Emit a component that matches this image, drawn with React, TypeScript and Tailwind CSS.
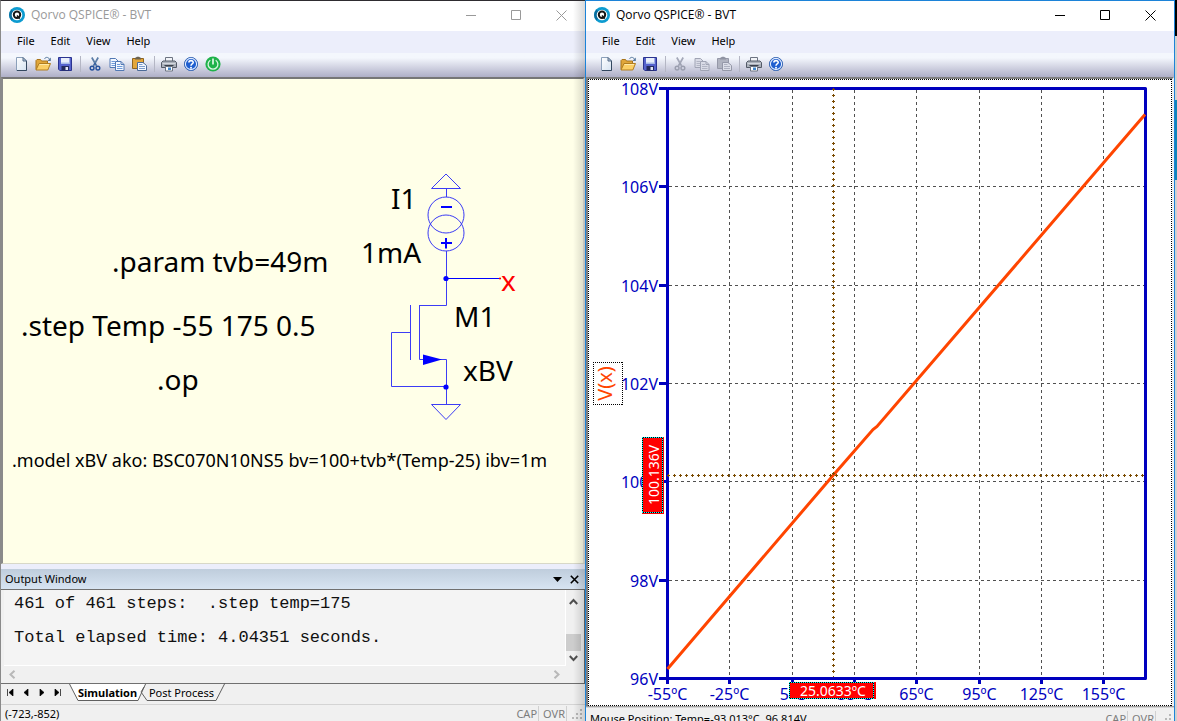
import React from "react";

const ui = "font-['Noto_Sans','Open_Sans',sans-serif]";

function Logo() {
  return (
    <svg viewBox="0 0 16 16" className="size-4 shrink-0" aria-hidden="true">
      <circle cx="8" cy="8" r="8" fill="#0c9bd0" />
      <path d="M2.4 2.4A8 8 0 0 0 2.4 13.6L8 8Z" fill="#0a6c9c" />
      <circle cx="8" cy="8" r="5.3" fill="#fff" />
      <circle cx="8" cy="7.7" r="3.2" fill="none" stroke="#161616" strokeWidth="2" />
      <path d="M8 8.5L10.8 11.6" stroke="#161616" strokeWidth="1.6" />
    </svg>
  );
}

function NewIcon() {
  return (
    <svg viewBox="0 0 16 16" className="size-4">
      <defs>
        <linearGradient id="page" x1="0" y1="0" x2="1" y2="1">
          <stop offset="0" stopColor="#fff" />
          <stop offset="1" stopColor="#d5e2f1" />
        </linearGradient>
      </defs>
      <path d="M3.5 1.5H10L13.5 5V14.5H3.5Z" fill="url(#page)" stroke="#8ba0ba" />
      <path d="M13.5 5V14.5H4" fill="none" stroke="#33475f" />
      <path d="M10 1.5V5H13.5Z" fill="#b7c8dc" stroke="#566c88" />
    </svg>
  );
}

function OpenIcon() {
  return (
    <svg viewBox="0 0 16 16" className="size-4">
      <path d="M1 13.5V4.5L2 3.5H5.5L6.5 5H12.5V13.5Z" fill="#e0a63a" stroke="#a8741b" />
      <path d="M1 14L4 7.5H15.5L12.8 14Z" fill="#fbcf66" stroke="#b07d20" />
      <path d="M4.6 8.5H14" stroke="#ffe9a8" />
      <path d="M9.5 3C10.5 .8 13 .8 14.4 3" fill="none" stroke="#55779c" />
      <path d="M15.8 1.6V5H12.4Z" fill="#55779c" />
    </svg>
  );
}

function SaveIcon() {
  return (
    <svg viewBox="0 0 16 16" className="size-4">
      <path d="M1.5 1.5H14.5V14.5H2.8L1.5 13.2Z" fill="#5562cc" stroke="#2b3490" />
      <path d="M4 2H12.5V8H4Z" fill="#e9effb" />
      <path d="M4 6.5H12.5V8H4Z" fill="#a9bce8" />
      <path d="M4.5 10H12V14.5H4.5Z" fill="#23295c" />
      <path d="M8.5 11H11V14H8.5Z" fill="#e2e6f5" />
    </svg>
  );
}

function CutIcon({ off }: { off?: boolean }) {
  const blade = off ? "#a4a8b8" : "#5c7ea8";
  const grip = off ? "#9a9eae" : "#24509c";
  return (
    <svg viewBox="0 0 16 16" className="size-4">
      <path d="M4.8 1.5L9.6 10M11.2 1.5L6.4 10" stroke={blade} strokeWidth="1.7" />
      <path d="M6.5 8.5H9.5L8 6.8Z" fill={grip} />
      <circle cx="5.1" cy="12.1" r="1.9" fill="none" stroke={grip} strokeWidth="1.4" />
      <circle cx="10.9" cy="12.1" r="1.9" fill="none" stroke={grip} strokeWidth="1.4" />
    </svg>
  );
}

function CopyIcon({ off }: { off?: boolean }) {
  const edge = off ? "#a0a4b4" : "#5279b4";
  const fill = off ? "#d9dbe6" : "#f4f8ff";
  const line = off ? "#b2b5c4" : "#6f9bd8";
  return (
    <svg viewBox="0 0 16 16" className="size-4">
      <path d="M1 2.5H6.5L9 5V11.5H1Z" fill={fill} stroke={edge} />
      <path d="M2.5 5.5H6M2.5 7.5H6M2.5 9.5H6" stroke={line} />
      <path d="M6.5 5.5H12L15 8.5V14.5H6.5Z" fill={fill} stroke={edge} />
      <path d="M12 5.5V8.5H15" fill="none" stroke={edge} />
      <path d="M8 8.5H11M8 10.5H13.5M8 12.5H13.5" stroke={line} />
    </svg>
  );
}

function PasteIcon({ off }: { off?: boolean }) {
  return (
    <svg viewBox="0 0 16 16" className="size-4">
      <path d="M1.5 2.5H12.5V12.5H1.5Z" fill={off ? "#b0b3c0" : "#e3a63a"} stroke={off ? "#9598a8" : "#8f6420"} />
      <path d="M4 3.5V2L6 .8H8L10 2V3.5Z" fill={off ? "#8f93a2" : "#6a6250"} />
      <path d="M6.5 6.5H12L15.5 9.5V14.5H6.5Z" fill={off ? "#dcdee8" : "#f4f8ff"} stroke={off ? "#9598a8" : "#4c6b98"} />
      <path d="M8 8.5H11.5M8 10.5H14M8 12.5H14" stroke={off ? "#aeb1c0" : "#7d9ccc"} />
    </svg>
  );
}

function PrintIcon() {
  return (
    <svg viewBox="0 0 16 16" className="size-4">
      <path d="M4.5 6V1.5H11.5V6" fill="#f2f4f8" stroke="#6d7482" />
      <path d="M.5 6.5L2 5H14L15.5 6.5V11.5H.5Z" fill="#aab0ba" stroke="#535a67" />
      <path d="M1.5 7.5H14.5" stroke="#d4d8df" />
      <path d="M3.5 9.5H12.5" stroke="#3a404b" />
      <path d="M4.5 10.5H11.5V15H4.5Z" fill="#fff" stroke="#6d7482" />
      <path d="M7 11.5H10V14H7Z" fill="#3f86cc" />
    </svg>
  );
}

function HelpIcon() {
  return (
    <svg viewBox="0 0 16 16" className="size-4">
      <circle cx="8" cy="8" r="6.6" fill="#1f5fd0" stroke="#3b69b4" />
      <circle cx="8" cy="8" r="5.6" fill="none" stroke="#e2edff" strokeWidth="1.1" />
      <path d="M5.9 6.6C5.9 3.9 10.3 4 10.2 6.5C10.1 8 8 8 8 9.7" fill="none" stroke="#fff" strokeWidth="1.6" />
      <circle cx="8" cy="11.7" r="1" fill="#fff" />
    </svg>
  );
}

function PowerIcon() {
  return (
    <svg viewBox="0 0 16 16" className="size-4">
      <circle cx="8" cy="8" r="7.6" fill="#1fb24a" />
      <path d="M5.3 4.2A4.9 4.9 0 1 0 10.7 4.2" fill="none" stroke="#d9f7e0" strokeWidth="1.3" />
      <path d="M8 2.5V8.5" stroke="#fff" strokeWidth="1.5" />
    </svg>
  );
}

function TitleBar({ active }: { active: boolean }) {
  return (
    <header
      className={`flex h-[30px] shrink-0 items-center bg-white pr-px pb-[2px] pl-2 ${active ? "text-black" : "text-[#999999]"}`}
    >
      <Logo />
      <h1 className="ml-[6px] flex-1 font-['Open_Sans','Noto_Sans',sans-serif] text-[12px] whitespace-nowrap">
        Qorvo QSPICE® - BVT
      </h1>
      <button aria-label="Minimize" className="flex h-full w-[45px] items-center justify-center">
        <svg viewBox="0 0 11 11" className="size-[11px]"><path d="M0 5.5H10" stroke="currentColor" /></svg>
      </button>
      <button aria-label="Maximize" className="flex h-full w-[45px] items-center justify-center">
        <svg viewBox="0 0 11 11" className="size-[11px]"><path d="M.5 .5H9.5V9.5H.5Z" fill="none" stroke="currentColor" /></svg>
      </button>
      <button aria-label="Close" className="flex h-full w-[45px] items-center justify-center">
        <svg viewBox="0 0 11 11" className="size-[11px]"><path d="M.5 .5L10.5 10.5M10.5 .5L.5 10.5" stroke="currentColor" /></svg>
      </button>
    </header>
  );
}

function MenuBar() {
  return (
    <nav className="flex h-[22px] shrink-0 items-center gap-4 bg-[#eceefb] pb-[2px] pl-4 text-[11px] text-black">
      {["File", "Edit", "View", "Help"].map((m) => (
        <button key={m}>{m}</button>
      ))}
    </nav>
  );
}

function Tool({ label, off, children }: { label: string; off?: boolean; children: React.ReactNode }) {
  return (
    <button aria-label={label} disabled={off} className="flex w-[22px] items-center justify-center">
      {children}
    </button>
  );
}

function Divider() {
  return (
    <span className="flex w-2 justify-center">
      <span className="h-4 w-px bg-[#b4b6c4]" />
    </span>
  );
}

function Toolbar({ schematic }: { schematic: boolean }) {
  const off = !schematic;
  return (
    <div className="flex h-[24px] shrink-0 items-center bg-linear-to-b from-[#f4f7fd] from-20% to-[#afafc7] pb-[2px] pl-[9px]">
      <Tool label="New"><NewIcon /></Tool>
      <Tool label="Open"><OpenIcon /></Tool>
      <Tool label="Save"><SaveIcon /></Tool>
      <Divider />
      <Tool label="Cut" off={off}><CutIcon off={off} /></Tool>
      <Tool label="Copy" off={off}><CopyIcon off={off} /></Tool>
      <Tool label="Paste" off={off}><PasteIcon off={off} /></Tool>
      <Divider />
      <Tool label="Print"><PrintIcon /></Tool>
      <Tool label="Help"><HelpIcon /></Tool>
      {schematic && <Tool label="Run"><PowerIcon /></Tool>}
    </div>
  );
}

function Schematic() {
  return (
    <svg
      role="img"
      aria-label="Schematic"
      viewBox="3 79 580 484"
      preserveAspectRatio="xMinYMin meet"
      className="h-full w-full font-['Noto_Sans',sans-serif]"
    >
      <g fill="none" stroke="#3c3cf5" strokeWidth="1">
        <path d="M446 174L460.5 188.5H431.5Z M446.5 188V197" />
        <circle cx="446" cy="215" r="18" />
        <circle cx="446" cy="233" r="18" />
        <path d="M446.500 251V305.500H419.500 M419.500 305V359.500H446.500V404 M410.500 305V360 M410.500 332.500H391.500V386.500H446" />
        <path d="M431.500 404.500H460.500L446 419.500Z" />
      </g>
      <path d="M446 278.500H501" stroke="#0000ff" />
      <path d="M441 207H452M441 243H452M446 238V248.500" stroke="#0000ff" strokeWidth="2" />
      <path d="M423 354.500V365L442 359.500Z" fill="#0000ff" />
      <circle cx="446" cy="278.500" r="2.600" fill="#0000ff" />
      <circle cx="446" cy="387" r="2.600" fill="#0000ff" />
      <circle cx="500" cy="278.500" r="1" fill="#ff0000" />
      <g fontSize="28" fill="#000">
        <text x="391" y="209">I1</text>
        <text x="361" y="263">1mA</text>
        <text x="112" y="272">.param tvb=49m</text>
        <text x="21" y="336">.step Temp -55 175 0.5</text>
        <text x="157" y="390">.op</text>
        <text x="454" y="327">M1</text>
        <text x="463" y="381">xBV</text>
        <text x="501" y="291" fill="#ff0000">x</text>
      </g>
      <text x="12" y="467" fontSize="18">.model xBV ako: BSC070N10NS5 bv=100+tvb*(Temp-25) ibv=1m</text>
    </svg>
  );
}

const yTicks = [
  { y: 88.5, label: "108V" },
  { y: 186.5, label: "106V" },
  { y: 285.5, label: "104V" },
  { y: 383.5, label: "102V" },
  { y: 481.5, label: "100V" },
  { y: 580.5, label: "98V" },
  { y: 678.5, label: "96V" },
];

const xTicks = [
  { x: 667.5, label: "-55ºC" },
  { x: 729.5, label: "-25ºC" },
  { x: 792.5, label: "5ºC" },
  { x: 854.5, label: "35ºC" },
  { x: 916.5, label: "65ºC" },
  { x: 979.5, label: "95ºC" },
  { x: 1041.5, label: "125ºC" },
  { x: 1103.5, label: "155ºC" },
];

function DottedBox({ x, y, w, h, under, dot }: { x: number; y: number; w: number; h: number; under?: string; dot: string }) {
  const r = x + w;
  const b = y + h;
  const d = `M${x} ${y + 0.5}H${r}M${x} ${b - 0.5}H${r}M${x + 0.5} ${y}V${b}M${r - 0.5} ${y}V${b}`;
  return (
    <g shapeRendering="crispEdges" fill="none">
      {under && <path d={d} stroke={under} />}
      <path d={d} stroke={dot} strokeDasharray="1 1" />
    </g>
  );
}

function Plot() {
  return (
    <svg
      role="img"
      aria-label="V(x) against temperature"
      viewBox="588 79 584 627"
      preserveAspectRatio="xMinYMin meet"
      className="h-full w-full font-['Noto_Sans',sans-serif]"
    >
      <DottedBox x={588} y={79} w={584} h={627} dot="#000" />
      <g stroke="#505050" strokeDasharray="3 3">
        {yTicks.slice(1, -1).map((t) => (
          <path key={t.y} d={`M669 ${t.y}H1144`} />
        ))}
        {xTicks.slice(1).map((t) => (
          <path key={t.x} d={`M${t.x} 90V677`} />
        ))}
      </g>
      <g stroke="#0000be" strokeWidth="3" fill="none">
        <path d="M667.5 88.500H1145.500V678.500H667.500Z" strokeLinejoin="round" />
        {yTicks.map((t) => (
          <path key={t.y} d={`M659 ${t.y}H667`} />
        ))}
        {xTicks.map((t) => (
          <path key={t.x} d={`M${t.x} 679V684`} />
        ))}
      </g>
      <g fill="#0000be" fontSize="16">
        {yTicks.map((t) => (
          <text key={t.y} x="658" y={t.y + 6} textAnchor="end">{t.label}</text>
        ))}
        {xTicks.map((t) => (
          <text key={t.x} x={t.x} y="700" textAnchor="middle">{t.label}</text>
        ))}
      </g>
      <path d="M667.5 669L833 475.500L873 429.500L877 426.500L1145 114.500" fill="none" stroke="#ff4500" strokeWidth="3" />
      <g stroke="#7a4a00">
        <path d="M667 475.500H1145" strokeWidth="1" strokeDasharray="3 3" />
        <path d="M668 475.500H1145" strokeWidth="3" strokeDasharray="1 5" />
        <path d="M833.500 88V677" strokeWidth="1" strokeDasharray="3 3" />
        <path d="M833.500 89V677" strokeWidth="3" strokeDasharray="1 5" />
      </g>
      <DottedBox x={593} y={362} w={30} h={43} dot="#000" />
      <text transform="translate(612 383.500) rotate(-90)" textAnchor="middle" fontSize="20" fill="#ff4500">V(x)</text>
      <rect x="642" y="437" width="22" height="77" fill="#ff0000" />
      <DottedBox x={642} y={437} w={21} h={76} under="#000" dot="#00ffff" />
      <text transform="translate(659 475) rotate(-90)" textAnchor="middle" fontSize="14" fill="#fff">100.136V</text>
      <rect x="789" y="682" width="87" height="17" fill="#ff0000" />
      <DottedBox x={789} y={682} w={85} h={17} under="#000" dot="#00ffff" />
      <text x="833" y="696" textAnchor="middle" fontSize="14" fill="#fff">25.0633ºC</text>
    </svg>
  );
}

function Chevron({ d, dim }: { d: string; dim?: boolean }) {
  return (
    <svg viewBox="0 0 9 9" className="size-[9px]">
      <path d={d} fill="none" stroke={dim ? "#b8b8b8" : "#505050"} strokeWidth="2" />
    </svg>
  );
}

const tabArrows = [
  { label: "First tab", d: "M1.500 0V7M7 0V7L3 3.500Z" },
  { label: "Previous tab", d: "M6 0V7L2 3.500Z" },
  { label: "Next tab", d: "M2 0V7L6 3.500Z" },
  { label: "Last tab", d: "M6.500 0V7M1 0V7L5 3.500Z" },
];

function OutputPanel() {
  return (
    <section className="flex h-[132px] shrink-0 flex-col bg-[#f0f0f0]">
      <div className="flex h-[20px] shrink-0 items-center bg-linear-to-b from-[#bfcddc] to-[#d7e4f2] pr-[2px] pl-[4px]">
        <h2 className="flex-1 text-[11px]">Output Window</h2>
        <button aria-label="Panel menu" className="flex w-[17px] justify-center">
          <svg viewBox="0 0 9 5" className="h-[5px] w-[9px]"><path d="M0 0H9L4.500 5Z" fill="#000" /></svg>
        </button>
        <button aria-label="Close panel" className="flex w-[17px] justify-center">
          <svg viewBox="0 0 9 9" className="size-[9px]"><path d="M.8 .8L8.200 8.200M8.200 .8L.8 8.200" stroke="#000" strokeWidth="1.600" /></svg>
        </button>
      </div>
      <div className="flex min-h-0 flex-1 flex-col border-t border-r border-b border-[#707070] bg-[#f0f0f0] pl-[3px]">
        <div className="flex min-h-0 flex-1">
          <pre className="min-w-0 flex-1 overflow-hidden border-r border-b border-white bg-[#f4f4f4] pt-[5px] pl-[10px] font-['Liberation_Mono',monospace] text-[17px] leading-[17px] text-[#101010]">
            {"461 of 461 steps:  .step temp=175\n\nTotal elapsed time: 4.04351 seconds."}
          </pre>
          <div className="flex w-[18px] flex-col items-center pt-[7px] pr-[3px] pb-[3px]">
            <Chevron d="M.8 7L4.500 3L8.200 7" />
            <span className="mt-7 h-[17px] w-[15px] bg-[#cdcdcd]" />
            <span className="mt-auto flex">
              <Chevron d="M.8 2L4.500 6L8.200 2" />
            </span>
          </div>
        </div>
        <div className="flex h-[17px] shrink-0 items-center justify-between pr-[23px] pl-[4px]">
          <Chevron dim d="M6.500 .8L2.500 4.500L6.500 8.200" />
          <Chevron dim d="M2.500 .8L6.500 4.500L2.500 8.200" />
        </div>
      </div>
      <div className="flex h-[17px] shrink-0">
        <div className="flex w-[68px] items-center gap-2 pl-[5px]">
          {tabArrows.map((a) => (
            <button key={a.label} aria-label={a.label}>
              <svg viewBox="0 0 8 7" className="h-[7px] w-2"><path d={a.d} fill="#000" stroke="#000" strokeWidth=".7" /></svg>
            </button>
          ))}
        </div>
        <button className="relative h-[17px] w-[77px] text-[11px] leading-[17px] font-bold whitespace-nowrap">
          <svg viewBox="0 0 77 17" className="absolute inset-0 h-full w-full">
            <path d="M0 -1L9 16.500H69L77 -1" fill="#fff" stroke="#606060" />
          </svg>
          <span className="relative">Simulation</span>
        </button>
        <button className="relative h-[17px] w-[79px] pr-2 text-[11px] leading-[17px] whitespace-nowrap">
          <svg viewBox="0 0 79 17" className="absolute inset-0 h-full w-full overflow-visible">
            <path d="M-5 8L1 16.500H70L79 -1M-5 8L-2 3" fill="none" stroke="#606060" />
          </svg>
          <span className="relative">Post Process</span>
        </button>
      </div>
    </section>
  );
}

function Grip() {
  return (
    <svg viewBox="0 0 11 11" className="size-[11px]" fill="#b8b8b8">
      <path d="M8 0h2v2h-2zM4 4h2v2h-2zM8 4h2v2h-2zM0 8h2v2h-2zM4 8h2v2h-2zM8 8h2v2h-2z" />
    </svg>
  );
}

function StatusBar({ text, tall }: { text: string; tall?: boolean }) {
  return (
    <footer
      className={`flex shrink-0 items-center border-t border-[#d4d4d4] bg-[#f0f0f0] pl-[4px] text-[11px] whitespace-nowrap ${tall ? "h-6" : "h-5"}`}
    >
      <span className="flex-1 text-black">{text}</span>
      <span className="border-r border-[#d0d0d0] px-px text-[#7c7c7c]">CAP</span>
      <span className="border-r border-[#d0d0d0] pr-px pl-1 text-[#7c7c7c]">OVR</span>
      <span className="pr-[2px] pl-[5px]"><Grip /></span>
    </footer>
  );
}

export default function App() {
  return (
    <main className={`grid h-screen min-h-[480px] grid-cols-[585fr_590fr_2fr] overflow-hidden bg-[#a0a0a0] text-black ${ui}`}>
      <div className="relative flex h-full min-h-0 min-w-0 flex-col overflow-hidden border-t border-l border-t-[#2e2c30] border-l-[#8a8a8a]">
        <TitleBar active={false} />
        <MenuBar />
        <Toolbar schematic />
        <div className="min-h-0 flex-1 overflow-hidden border-t-2 border-r-2 border-b border-l-2 border-t-[#767676] border-r-[#e4e4dc] border-b-[#d8d8c8] border-l-[#8a8a8a] bg-[#ffffe8]">
          <Schematic />
        </div>
        <div className="h-[5px] shrink-0 bg-[#eceefb]" />
        <OutputPanel />
        <div className="h-[3px] shrink-0 bg-[#f0f0f0]" />
        <div className="h-[17px] shrink-0 overflow-hidden">
          <StatusBar text="(-723,-852)" />
        </div>
        <div className="pointer-events-none absolute inset-y-0 right-0 w-3 bg-linear-to-r from-transparent to-black/15" />
      </div>
      <div className="flex h-full min-h-0 min-w-0 flex-col overflow-hidden border-t border-r border-l border-[#1c83d8]">
        <TitleBar active />
        <MenuBar />
        <Toolbar schematic={false} />
        <div className="min-h-0 flex-1 border-t-2 border-r-2 border-l-2 border-t-[#808080] border-r-[#f0f0f0] border-l-[#808080] bg-white">
          <Plot />
        </div>
        <div className="mt-px h-[14px] shrink-0 overflow-hidden bg-[#f0f0f0]">
          <StatusBar tall text="Mouse Position: Temp=-93.013°C, 96.814V" />
        </div>
      </div>
      <div className="flex flex-col">
        <span className="h-9 bg-black" />
        <span className="h-16 bg-[#d0d0d0]" />
        <span className="h-20 bg-[#1286b8]" />
        <span className="flex-1 bg-[#cfcfcf]" />
      </div>
    </main>
  );
}
